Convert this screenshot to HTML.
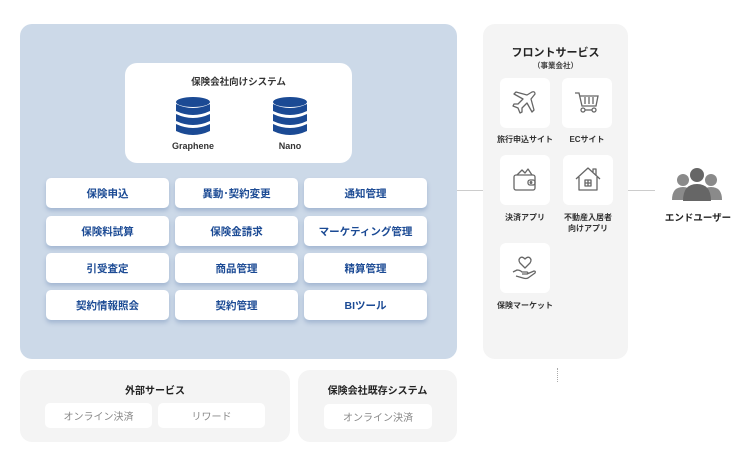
<!DOCTYPE html>
<html><head><meta charset="utf-8"><style>
*{margin:0;padding:0;box-sizing:border-box}
body{width:750px;height:470px;background:#fff;position:relative;font-family:"Liberation Sans","Noto Sans CJK JP",sans-serif;overflow:hidden}
.a{position:absolute}
.main{left:20px;top:24px;width:437px;height:335px;background:#ccd9e8;border-radius:12px}
.inner{left:125px;top:63px;width:227px;height:100px;background:#fff;border-radius:12px}
.btn{position:absolute;width:123px;height:30px;background:#fff;border-radius:5px;box-shadow:0 3px 4px rgba(90,120,170,.35);color:#1b4a94;font-weight:bold;font-size:10.5px;display:flex;align-items:center;justify-content:center}
.gray{background:#f4f4f4;border-radius:12px}
.sub{position:absolute;height:25px;background:#fff;border-radius:5px;color:#888;font-size:10px;display:flex;align-items:center;justify-content:center}
.t{position:absolute;font-size:10px;font-weight:bold;color:#222;text-align:center}
.tile{position:absolute;width:50px;height:50px;background:#fff;border-radius:6px;display:flex;align-items:center;justify-content:center}
.lab{position:absolute;font-size:8px;font-weight:bold;color:#333;text-align:center;line-height:11px}
</style></head><body>
<div class="a main"></div>
<div class="a inner"></div>
<div class="t" style="left:125px;top:74px;width:227px;font-size:9.5px;color:#333">保険会社向けシステム</div>
<svg class="a" style="left:175px;top:97px" width="36" height="40" viewBox="0 0 36 40"><g fill="#1b4a94"><ellipse cx="18" cy="5" rx="17" ry="5"/><path d="M1 7q17 8 34 0v7q-17 8-34 0z"/><path d="M1 17q17 8 34 0v7q-17 8-34 0z"/><path d="M1 27q17 8 34 0v7q-17 8-34 0z"/></g></svg>
<svg class="a" style="left:272px;top:97px" width="36" height="40" viewBox="0 0 36 40"><g fill="#1b4a94"><ellipse cx="18" cy="5" rx="17" ry="5"/><path d="M1 7q17 8 34 0v7q-17 8-34 0z"/><path d="M1 17q17 8 34 0v7q-17 8-34 0z"/><path d="M1 27q17 8 34 0v7q-17 8-34 0z"/></g></svg>
<div class="t" style="left:150px;top:141px;width:86px;font-size:9px;color:#333">Graphene</div>
<div class="t" style="left:247px;top:141px;width:86px;font-size:9px;color:#333">Nano</div>

<div class="btn" style="left:46px;top:178px">保険申込</div>
<div class="btn" style="left:175px;top:178px">異動･契約変更</div>
<div class="btn" style="left:304px;top:178px">通知管理</div>
<div class="btn" style="left:46px;top:216px">保険料試算</div>
<div class="btn" style="left:175px;top:216px">保険金請求</div>
<div class="btn" style="left:304px;top:216px">マーケティング管理</div>
<div class="btn" style="left:46px;top:253px">引受査定</div>
<div class="btn" style="left:175px;top:253px">商品管理</div>
<div class="btn" style="left:304px;top:253px">精算管理</div>
<div class="btn" style="left:46px;top:290px">契約情報照会</div>
<div class="btn" style="left:175px;top:290px">契約管理</div>
<div class="btn" style="left:304px;top:290px">BIツール</div>

<div class="a gray" style="left:20px;top:370px;width:270px;height:72px"></div>
<div class="a gray" style="left:298px;top:370px;width:159px;height:72px"></div>
<div class="t" style="left:20px;top:382px;width:270px">外部サービス</div>
<div class="t" style="left:298px;top:382px;width:159px">保険会社既存システム</div>
<div class="sub" style="left:45px;top:403px;width:107px">オンライン決済</div>
<div class="sub" style="left:158px;top:403px;width:107px">リワード</div>
<div class="sub" style="left:324px;top:404px;width:108px">オンライン決済</div>

<div class="a" style="left:457px;top:190px;width:26px;height:1px;background:#ccc"></div>
<div class="a" style="left:628px;top:190px;width:27px;height:1px;background:#ccc"></div>
<div class="a" style="left:557px;top:368px;width:1px;height:14px;border-left:1px dotted #aaa"></div>

<div class="a gray" style="left:483px;top:24px;width:145px;height:335px"></div>
<div class="t" style="left:483px;top:44px;width:145px;font-size:11px">フロントサービス</div>
<div class="t" style="left:483px;top:60px;width:145px;font-size:7.5px;color:#444">（事業会社）</div>

<div class="tile" style="left:500px;top:78px"><svg width="30" height="30" viewBox="0 0 30 30" fill="none" stroke="#666" stroke-width="1.3" stroke-linejoin="round"><path d="M22 4q3-1 3 2l-4 5 3 11-2 2-5-9-5 5 0 4-2 1-2-5-5-2 1-2 4 0 5-5-9-5 2-2 11 3z"/></svg></div>
<div class="tile" style="left:562px;top:78px"><svg width="30" height="30" viewBox="0 0 30 30" fill="none" stroke="#666" stroke-width="1.3"><path d="M3 5h4l3 13h14l2-10H8"/><path d="M13 9v7M17 9v7M21 9v7"/><circle cx="11" cy="22" r="2"/><circle cx="22" cy="22" r="2"/><path d="M13 22h7"/></svg></div>
<div class="lab" style="left:495px;top:134px;width:60px">旅行申込サイト</div>
<div class="lab" style="left:557px;top:134px;width:60px">ECサイト</div>

<div class="tile" style="left:500px;top:155px"><svg width="30" height="30" viewBox="0 0 30 30" fill="none" stroke="#666" stroke-width="1.3" stroke-linejoin="round"><path d="M7 10l5-5 3 3 3-4 4 6"/><rect x="4" y="10" width="21" height="15" rx="2"/><rect x="18" y="15" width="7" height="5" rx="2"/><circle cx="21" cy="17.5" r=".8"/></svg></div>
<div class="tile" style="left:563px;top:155px"><svg width="30" height="30" viewBox="0 0 30 30" fill="none" stroke="#666" stroke-width="1.3" stroke-linejoin="round"><path d="M3 14L15 3l12 11"/><path d="M6 12v13h18V12"/><path d="M20 7V4h3v6"/><rect x="12" y="15" width="6" height="6"/><path d="M15 15v6M12 18h6"/></svg></div>
<div class="lab" style="left:495px;top:212px;width:60px">決済アプリ</div>
<div class="lab" style="left:557px;top:212px;width:62px">不動産入居者<br>向けアプリ</div>

<div class="tile" style="left:500px;top:243px"><svg width="30" height="30" viewBox="0 0 30 30" fill="none" stroke="#666" stroke-width="1.3" stroke-linejoin="round"><path d="M15 15l-5-5q-2-3 0-5t5 1q3-3 5-1t0 5z"/><path d="M3 19l4-2q3 0 5 2h5q2 1 0 2h-5"/><path d="M17 21l7-3q2 0 1 2l-7 5q-2 1-5 0l-7-2"/></svg></div>
<div class="lab" style="left:495px;top:300px;width:60px">保険マーケット</div>

<svg class="a" style="left:672px;top:167px" width="50" height="36" viewBox="0 0 50 36"><g fill="#8a8a8a"><circle cx="11" cy="13" r="6"/><circle cx="39" cy="13" r="6"/><path d="M0 33q0-13 11-13q11 0 11 13z"/><path d="M28 33q0-13 11-13q11 0 11 13z"/></g><g fill="#666"><circle cx="25" cy="8" r="7"/><path d="M11 34q0-17 14-17q14 0 14 17z"/></g></svg>
<div class="t" style="left:655px;top:210px;width:86px;font-size:9.5px">エンドユーザー</div>
</body></html>
